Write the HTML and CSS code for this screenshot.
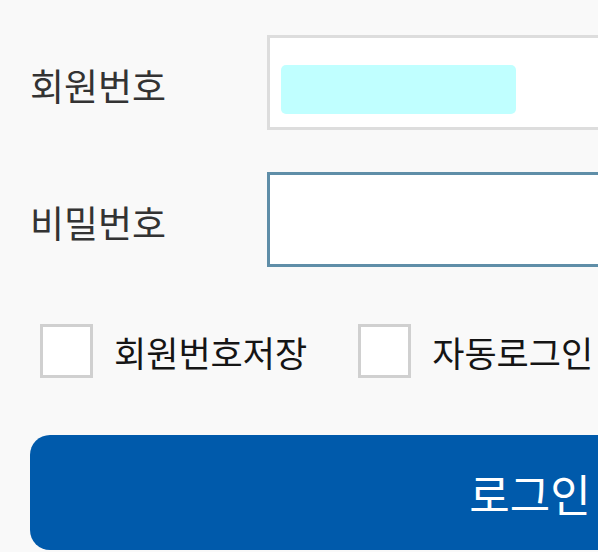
FILE: index.html
```html
<!DOCTYPE html>
<html lang="ko">
<head>
<meta charset="utf-8">
<link rel="stylesheet" href="styles.css">
</head>
<body>
<div class="form">
  <div class="row row-id">
    <div class="label">회원번호</div>
    <div class="field field-id"><div class="autofill"></div></div>
  </div>
  <div class="row row-pw">
    <div class="label">비밀번호</div>
    <div class="field field-pw"></div>
  </div>
  <div class="checks">
    <div class="check"><span class="box"></span><span class="check-label">회원번호저장</span></div>
    <div class="check"><span class="box"></span><span class="check-label">자동로그인</span></div>
  </div>
  <div class="btn">로그인</div>
</div>
</body>
</html>
```
FILE: styles.css
```css
html, body {
  margin: 0;
  padding: 0;
  background: #f9f9f9;
  overflow: hidden;
}
body {
  width: 598px;
  height: 552px;
  font-family: "Noto Sans CJK KR", "Noto Sans", sans-serif;
  color: #333;
}
.form {
  width: 1000px;
  padding: 35px 0 0 30px;
  display: flex;
  flex-direction: column;
}
.row {
  display: flex;
  align-items: center;
  height: 95px;
}
.row-pw {
  margin-top: 42px;
}
.label {
  width: 237px;
  flex: none;
  font-size: 37px;
  font-weight: 400;
  line-height: 1;
  padding-top: 6px;
}
.field {
  box-sizing: border-box;
  height: 95px;
  flex: 1;
  background: #fff;
  border: 3px solid #dddddd;
}
.field-pw {
  border-color: #5f8ea8;
}
.field-id {
  padding: 27px 0 0 11px;
}
.autofill {
  width: 235px;
  height: 49px;
  background: #c0ffff;
  border-radius: 5px;
}
.checks {
  display: flex;
  align-items: center;
  margin-top: 57px;
  padding-left: 10px;
  gap: 51px;
}
.check {
  display: flex;
  align-items: center;
  gap: 21px;
}
.box {
  box-sizing: border-box;
  width: 53px;
  height: 54px;
  background: #fff;
  border: 3px solid #d0d0d0;
}
.check-label {
  font-size: 35px;
  font-weight: 400;
  line-height: 1;
  color: #151515;
}
.btn {
  margin-top: 57px;
  height: 115px;
  border-radius: 20px;
  background: #005aab;
  color: #fff;
  font-size: 44px;
  font-weight: 400;
  display: flex;
  align-items: center;
  justify-content: center;
}
```
